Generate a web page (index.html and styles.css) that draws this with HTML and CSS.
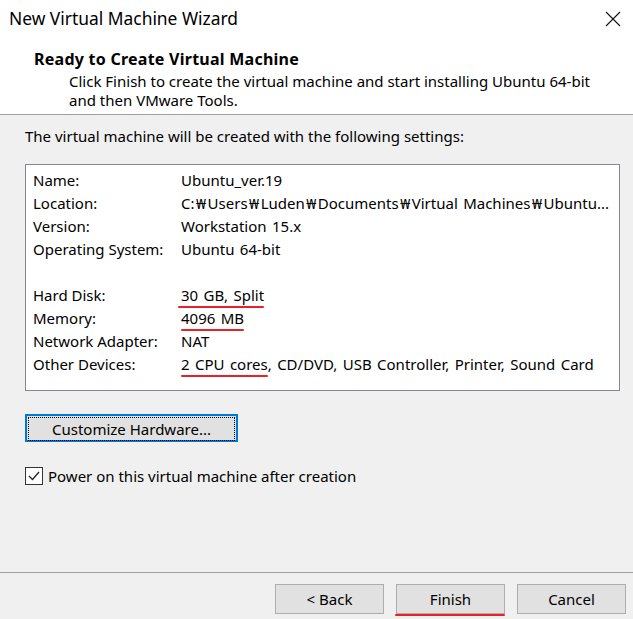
FILE: index.html
```html
<!DOCTYPE html>
<html>
<head>
  <meta charset="utf-8">
  <link rel="stylesheet" href="styles.css">
</head>
<body>
  <div class="dialog">
    <div class="titlebar">
      <span class="title">New Virtual Machine Wizard</span>
      <svg class="close" width="16" height="16" viewBox="0 0 16 16">
        <path d="M1 1 L15 15 M15 1 L1 15" stroke="#111" stroke-width="1.1" fill="none"/>
      </svg>
    </div>

    <div class="header">
      <div class="heading">Ready to Create Virtual Machine</div>
      <div class="desc">Click Finish to create the virtual machine and start installing Ubuntu 64-bit<br>and then VMware Tools.</div>
    </div>

    <div class="content">
      <p class="intro">The virtual machine will be created with the following settings:</p>

      <div class="summary">
        <div class="row"><span>Name:</span><span>Ubuntu_ver.19</span></div>
        <div class="row"><span>Location:</span><span>C:<span class="won">&#8361;</span>Users<span class="won">&#8361;</span>Luden<span class="won">&#8361;</span>Documents<span class="won">&#8361;</span>Virtual Machines<span class="won">&#8361;</span>Ubuntu...</span></div>
        <div class="row"><span>Version:</span><span>Workstation 15.x</span></div>
        <div class="row"><span>Operating System:</span><span>Ubuntu 64-bit</span></div>
        <div class="row"><span></span><span></span></div>
        <div class="row"><span>Hard Disk:</span><span><span class="mark wide">30 GB, Split</span></span></div>
        <div class="row"><span>Memory:</span><span><span class="mark">4096 MB</span></span></div>
        <div class="row"><span>Network Adapter:</span><span>NAT</span></div>
        <div class="row"><span>Other Devices:</span><span><span class="mark">2 CPU cores</span>, CD/DVD, USB Controller, Printer, Sound Card</span></div>
      </div>

      <button class="btn customize"><span class="focus">Customize Hardware...</span></button>

      <label class="check">
        <span class="box">
          <svg width="14" height="14" viewBox="0 0 14 14">
            <path d="M2 7 L5.5 10.5 L12 3" stroke="#222" stroke-width="1.3" fill="none"/>
          </svg>
        </span>
        Power on this virtual machine after creation
      </label>
    </div>

    <div class="footer">
      <button class="btn">&lt; Back</button>
      <button class="btn finish">Finish</button>
      <button class="btn">Cancel</button>
    </div>
  </div>
</body>
</html>
```

FILE: styles.css
```css
body {
  margin: 0;
  font-family: "Noto Sans", "Liberation Sans", sans-serif;
  font-size: 15px;
  color: #000;
  background: #f0f0f0;
}

.dialog {
  width: 633px;
  height: 619px;
  display: flex;
  flex-direction: column;
  overflow: hidden;
}

.titlebar {
  height: 36px;
  background: #fff;
  display: flex;
  align-items: center;
  justify-content: space-between;
  padding: 0 12px 0 9px;
}

.title {
  font-size: 17.4px;
}

.close {
  margin-top: 1px;
}

.header {
  background: #fff;
  height: 78px;
  padding-left: 34px;
  border-bottom: 1px solid #a0a0a0;
}

.heading {
  font-weight: bold;
  font-size: 16px;
  letter-spacing: 0.25px;
  margin-top: 12px;
  line-height: 22px;
}

.desc {
  padding: 2px 0 0 35px;
  line-height: 19px;
}

.content {
  flex: 1;
  padding: 0 13px 0 25px;
}

.intro {
  margin: 11px 0 0;
  line-height: 20px;
}

.summary {
  box-sizing: border-box;
  margin-top: 18px;
  height: 227px;
  background: #fff;
  border: 1px solid #828790;
  padding: 4px 7px 0;
}

.row {
  display: grid;
  grid-template-columns: 148px 1fr;
  line-height: 23px;
  height: 23px;
  white-space: nowrap;
}

.row span + span {
  word-spacing: 1.5px;
}

.won {
  margin: 0 1.5px;
}

.mark {
  position: relative;
}

.mark::after {
  content: "";
  position: absolute;
  left: 0;
  right: 0;
  bottom: -3px;
  height: 2px;
  background: #e8202a;
  border-radius: 1px;
}

.mark.wide::after {
  left: -3px;
}

.btn {
  font: inherit;
  background: #e1e1e1;
  border: 1px solid #adadad;
  color: #000;
  height: 30px;
  padding: 0;
}

.customize {
  margin-top: 23px;
  width: 213px;
  height: 28px;
  border: 2px solid #0078d7;
  padding: 1px;
  display: block;
}

.customize .focus {
  display: flex;
  height: 100%;
  align-items: center;
  justify-content: center;
  border: 1px dotted #000;
}

.check {
  display: flex;
  align-items: center;
  gap: 5px;
  margin-top: 24px;
}

.box {
  width: 16px;
  height: 16px;
  border: 1px solid #333;
  background: #fff;
  display: flex;
  align-items: center;
  justify-content: center;
}

.footer {
  box-sizing: border-box;
  height: 47px;
  border-top: 1px solid #a0a0a0;
  display: flex;
  gap: 12px;
  padding: 11px 0 0 275px;
}

.footer .btn {
  width: 109px;
}

.finish {
  position: relative;
}

.finish::after {
  content: "";
  position: absolute;
  left: -2px;
  right: -1px;
  bottom: -3px;
  height: 2px;
  background: #e8202a;
  border-radius: 1px;
}
```
